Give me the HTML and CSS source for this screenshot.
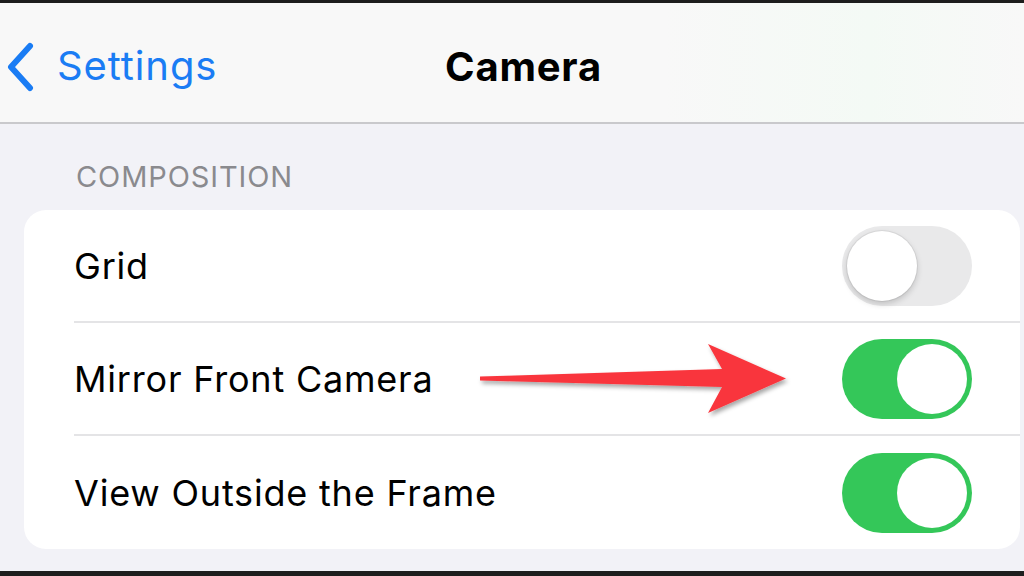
FILE: index.html
```html
<!DOCTYPE html>
<html lang="en">
<head>
<meta charset="utf-8">
<title>Camera</title>
<link rel="stylesheet" href="styles.css">
</head>
<body>
<div class="screen">
  <header class="nav">
    <a class="back">
      <svg class="chev" width="30" height="50" viewBox="0 0 30 50"><path d="M25 4 L6 25 L25 46" fill="none" stroke="#1a7cf4" stroke-width="6" stroke-linecap="round" stroke-linejoin="round"/></svg>
      <span>Settings</span>
    </a>
    <h1 class="title">Camera</h1>
  </header>
  <main class="content">
    <div class="section-title">COMPOSITION</div>
    <div class="card">
      <div class="row">
        <span class="label">Grid</span>
        <span class="toggle off"><span class="knob"></span></span>
      </div>
      <div class="row">
        <span class="label">Mirror Front Camera</span>
        <span class="toggle on"><span class="knob"></span></span>
      </div>
      <div class="row">
        <span class="label">View Outside the Frame</span>
        <span class="toggle on"><span class="knob"></span></span>
      </div>
      <svg class="arrow" width="330" height="90" viewBox="470 335 330 90">
        <defs>
          <filter id="sh" x="-10%" y="-30%" width="120%" height="160%">
            <feDropShadow dx="2" dy="3" stdDeviation="2" flood-color="#000" flood-opacity="0.35"/>
          </filter>
        </defs>
        <polygon filter="url(#sh)" fill="#f9363d" points="480,375.5 722,368 708,343 786,377.5 708,412 722,386 480,379.5"/>
      </svg>
    </div>
  </main>
</div>
</body>
</html>
```
FILE: styles.css
```css
* { box-sizing: border-box; margin: 0; padding: 0; }
html, body { width: 1024px; height: 576px; overflow: hidden; }
body {
  background: #1d1d1d;
  font-family: Inter, "Liberation Sans", Arial, sans-serif;
}
.screen {
  margin-top: 3px;
  height: 568px;
  background: #f2f2f7;
  display: flex;
  flex-direction: column;
}
.nav {
  height: 121px;
  background: linear-gradient(90deg, #f8f8f8 0%, #f8f8f8 65%, #f4faf5 85%, #f8f8f8 100%);
  border-bottom: 2px solid #c9c9cc;
  display: flex;
  align-items: center;
  position: relative;
  padding-top: 6px;
}
.back {
  display: flex;
  align-items: center;
  gap: 22px;
  padding-left: 5px;
  color: #1a7cf4;
  font-size: 40px;
  font-weight: 400;
  letter-spacing: 0.9px;
}
.back .chev { margin-top: 2px; }
.title {
  position: absolute;
  left: 445px;
  top: 44px;
  font-size: 40px;
  font-weight: 700;
  color: #000;
  line-height: 1;
  letter-spacing: 0.8px;
}
.content {
  flex: 1;
  padding: 38px 2px 0 24px;
}
.section-title {
  padding-left: 52px;
  font-size: 29px;
  color: #8a8a8e;
  letter-spacing: 0.9px;
  line-height: 1;
  height: 48px;
}
.card {
  position: relative;
  background: #fff;
  border-radius: 22px;
  width: 996px;
}
.row {
  height: 113px;
  display: flex;
  align-items: center;
  justify-content: space-between;
  margin-left: 50px;
  padding-right: 48px;
  border-bottom: 2px solid #e4e4e6;
}
.row:last-of-type { border-bottom: none; }
.label {
  font-size: 36px;
  color: #000;
  letter-spacing: 0.8px;
}
.toggle {
  width: 130px;
  height: 80px;
  border-radius: 40px;
  display: flex;
  align-items: center;
  padding: 5px;
}
.toggle .knob {
  width: 70px;
  height: 70px;
  border-radius: 50%;
  background: #fff;
}
.toggle.off {
  background: #e9e9ea;
  justify-content: flex-start;
}
.toggle.off .knob {
  box-shadow: 0 3px 6px rgba(0,0,0,0.18), 0 0 0 1px rgba(0,0,0,0.06);
}
.toggle.on {
  background: #34c759;
  justify-content: flex-end;
}
.arrow {
  position: absolute;
  left: 446px;
  top: 126px;
}
```
